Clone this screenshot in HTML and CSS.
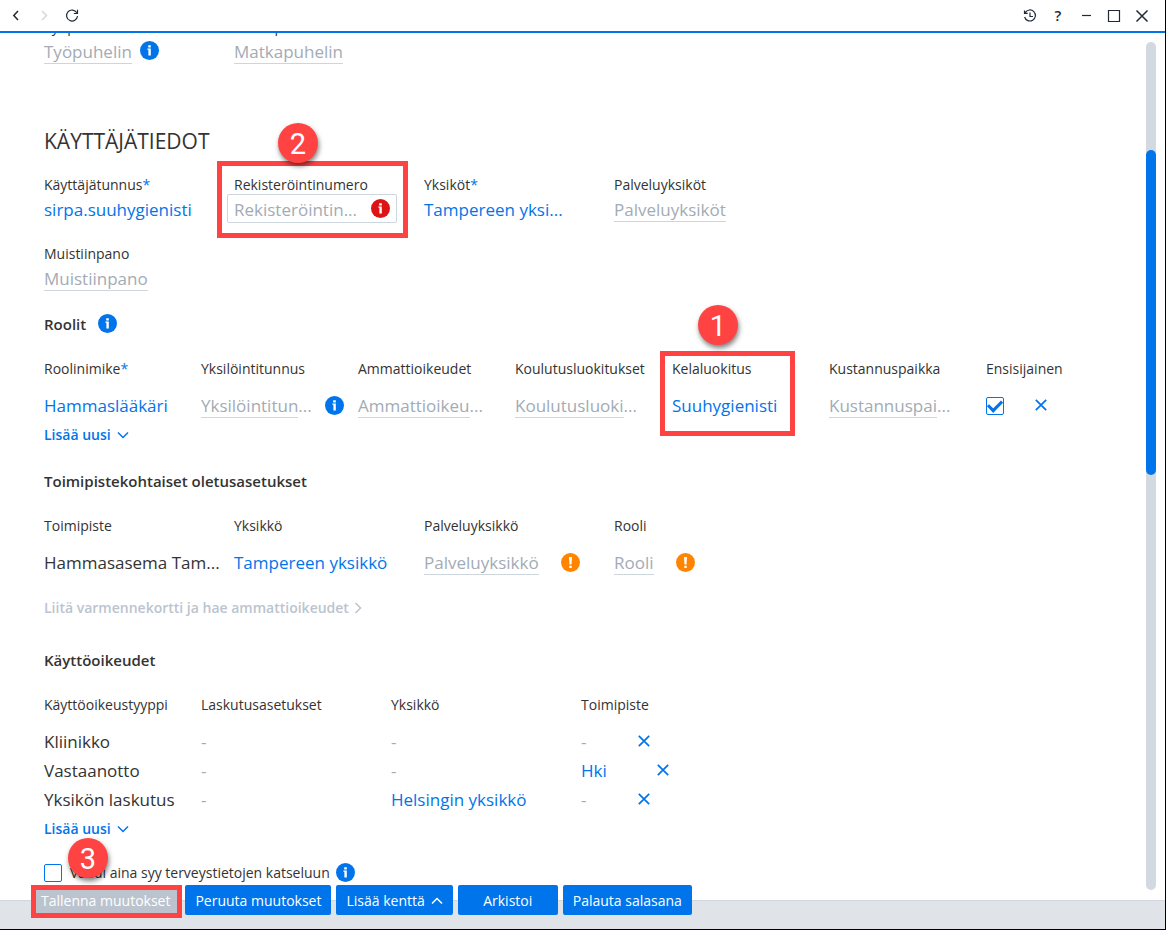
FILE: index.html
```
<!DOCTYPE html>
<html lang="fi">
<head>
    <meta charset="utf-8">
    <title>Käyttäjätiedot</title>
    <link rel="stylesheet" href="styles.css">
</head>
<body>
    <!-- Shared icons -->
    <svg class="sprite" aria-hidden="true">
        <symbol id="icon-info" viewBox="0 0 19 19">
            <circle cx="9.5" cy="9.5" r="9.5" fill="currentColor"/>
            <path d="M8.2 4.2h2.6v2.2H8.2zM7.4 7.6h3.4v6.9H8.4V8.8h-1z" fill="#fff"/>
        </symbol>
        <symbol id="icon-warn" viewBox="0 0 19 19">
            <circle cx="9.5" cy="9.5" r="9.5" fill="currentColor"/>
            <path d="M8 4h3l-.5 7.5h-2zM8.3 12.7h2.4V15H8.3z" fill="#fff"/>
        </symbol>
        <symbol id="icon-x" viewBox="0 0 12 12">
            <path d="M.8.8l10.4 10.4M11.2.8L.8 11.2" fill="none" stroke="currentColor" stroke-width="1.7"/>
        </symbol>
        <symbol id="icon-down" viewBox="0 0 12 12">
            <path d="M1 3.5l5 5 5-5" fill="none" stroke="currentColor" stroke-width="1.5"/>
        </symbol>
    </svg>

    <header class="titlebar">
        <button class="tool" aria-label="Takaisin"><svg width="14" height="14" viewBox="0 0 14 14"><path d="M9 2L4.8 6.5 9 11"/></svg></button>
        <button class="tool muted" aria-label="Eteenpäin" disabled><svg width="14" height="14" viewBox="0 0 14 14"><path d="M5 2l4.5 4.5L5 11"/></svg></button>
        <button class="tool thin" aria-label="Päivitä"><svg width="14" height="14" viewBox="0 0 14 14"><path d="M11.8 3.8A5.5 5.5 0 1 0 12.5 7M12.5 .8v3.7H8.8"/></svg></button>
        <span class="spacer"></span>
        <button class="tool thin" aria-label="Historia"><svg width="14" height="14" viewBox="0 0 14 14"><path d="M2.2 3.6A5.5 5.5 0 1 1 1.6 8M1.5 1.4v3h3.2M7 3.5v4h3"/></svg></button>
        <button class="tool help" aria-label="Ohje">?</button>
        <button class="tool thin" aria-label="Pienennä"><svg width="14" height="14" viewBox="0 0 14 14"><path d="M3 6.5h9"/></svg></button>
        <button class="tool thin" aria-label="Suurenna"><svg width="14" height="14" viewBox="0 0 14 14"><path d="M1.5 1.5h11v11h-11z"/></svg></button>
        <button class="tool" aria-label="Sulje"><svg width="14" height="14" viewBox="0 0 14 14"><path d="M1.5 1.5l11 11M12.5 1.5l-11 11"/></svg></button>
    </header>

    <main class="main">
        <div class="content">
            <!-- Phone numbers -->
            <div class="fields phones">
                <div class="field">
                    <div class="label">Työpuhelin</div>
                    <div class="value-row"><button class="value empty">Työpuhelin</button><svg class="badge-icon"><use href="#icon-info"/></svg></div>
                </div>
                <div class="field">
                    <div class="label">Matkapuhelin</div>
                    <div class="value-row"><button class="value empty">Matkapuhelin</button></div>
                </div>
            </div>

            <h1>KÄYTTÄJÄTIEDOT</h1>
            <div class="fields">
                <div class="field">
                    <div class="label">Käyttäjätunnus<span class="req">*</span></div>
                    <div class="value-row"><button class="value">sirpa.suuhygienisti</button></div>
                </div>
                <div class="field">
                    <label class="label" for="regnum">Rekisteröintinumero</label>
                    <div class="input-box">
                        <input type="text" id="regnum" placeholder="Rekisteröintin...">
                        <svg class="badge-icon error"><use href="#icon-info"/></svg>
                    </div>
                    <div class="mark mark-reg"></div>
                    <div class="step step-reg">2</div>
                </div>
                <div class="field">
                    <div class="label">Yksiköt<span class="req">*</span></div>
                    <div class="value-row"><button class="value">Tampereen yksi...</button></div>
                </div>
                <div class="field">
                    <div class="label">Palveluyksiköt</div>
                    <div class="value-row"><button class="value empty">Palveluyksiköt</button></div>
                </div>
                <div class="field">
                    <div class="label">Muistiinpano</div>
                    <div class="value-row"><button class="value empty">Muistiinpano</button></div>
                </div>
            </div>

            <!-- Roles -->
            <h2>Roolit <svg class="badge-icon"><use href="#icon-info"/></svg></h2>
            <table class="roles">
                <thead>
                    <tr>
                        <th>Roolinimike<span class="req">*</span></th>
                        <th>Yksilöintitunnus</th>
                        <th>Ammattioikeudet</th>
                        <th>Koulutusluokitukset</th>
                        <th>Kelaluokitus</th>
                        <th>Kustannuspaikka</th>
                        <th>Ensisijainen</th>
                    </tr>
                </thead>
                <tbody>
                    <tr>
                        <td><button class="value">Hammaslääkäri</button></td>
                        <td><div class="value-row mid"><button class="cut"><span class="value empty">Yksilöintitun</span>...</button><svg class="badge-icon"><use href="#icon-info"/></svg></div></td>
                        <td><button class="cut"><span class="value empty">Ammattioikeu</span>...</button></td>
                        <td><button class="cut"><span class="value empty">Koulutusluoki</span>...</button></td>
                        <td class="field">
                            <button class="value">Suuhygienisti</button>
                            <div class="mark mark-kela"></div>
                            <div class="step step-kela">1</div>
                        </td>
                        <td><button class="cut"><span class="value empty">Kustannuspai</span>...</button></td>
                        <td><div class="value-row primary"><input type="checkbox" aria-label="Ensisijainen" checked><button class="remove" aria-label="Poista"><svg><use href="#icon-x"/></svg></button></div></td>
                    </tr>
                </tbody>
            </table>
            <button class="add">Lisää uusi <svg><use href="#icon-down"/></svg></button>

            <!-- Office defaults -->
            <h2>Toimipistekohtaiset oletusasetukset</h2>
            <table class="offices">
                <thead>
                    <tr><th>Toimipiste</th><th>Yksikkö</th><th>Palveluyksikkö</th><th>Rooli</th></tr>
                </thead>
                <tbody>
                    <tr>
                        <td>Hammasasema Tam...</td>
                        <td><button class="value">Tampereen yksikkö</button></td>
                        <td><div class="value-row wide"><button class="value empty">Palveluyksikkö</button><svg class="badge-icon warn"><use href="#icon-warn"/></svg></div></td>
                        <td><div class="value-row wide"><button class="value empty">Rooli</button><svg class="badge-icon warn"><use href="#icon-warn"/></svg></div></td>
                    </tr>
                </tbody>
            </table>
            <button class="add attach" disabled>Liitä varmennekortti ja hae ammattioikeudet <svg class="right"><use href="#icon-down"/></svg></button>

            <!-- Permissions -->
            <h2 class="rights-title">Käyttöoikeudet</h2>
            <table class="rights">
                <thead>
                    <tr><th>Käyttöoikeustyyppi</th><th>Laskutusasetukset</th><th>Yksikkö</th><th>Toimipiste</th></tr>
                </thead>
                <tbody>
                    <tr>
                        <td>Kliinikko</td>
                        <td class="none">-</td>
                        <td class="none">-</td>
                        <td class="none"><div class="value-row last">-<button class="remove" aria-label="Poista"><svg><use href="#icon-x"/></svg></button></div></td>
                    </tr>
                    <tr>
                        <td>Vastaanotto</td>
                        <td class="none">-</td>
                        <td class="none">-</td>
                        <td><div class="value-row last"><button class="value">Hki</button><button class="remove" aria-label="Poista"><svg><use href="#icon-x"/></svg></button></div></td>
                    </tr>
                    <tr>
                        <td>Yksikön laskutus</td>
                        <td class="none">-</td>
                        <td><button class="value">Helsingin yksikkö</button></td>
                        <td class="none"><div class="value-row last">-<button class="remove" aria-label="Poista"><svg><use href="#icon-x"/></svg></button></div></td>
                    </tr>
                </tbody>
            </table>
            <button class="add">Lisää uusi <svg><use href="#icon-down"/></svg></button>

            <div class="check-row">
                <input type="checkbox" id="require-reason">
                <label for="require-reason">Vaadi aina syy terveystietojen katseluun</label>
                <svg class="badge-icon"><use href="#icon-info"/></svg>
            </div>
        </div>
        <div class="scrollbar"><div class="thumb"></div></div>
    </main>

    <footer class="actions">
        <div class="field">
            <button class="button" disabled>Tallenna muutokset</button>
            <div class="mark mark-save"></div>
            <div class="step step-save">3</div>
        </div>
        <button class="button">Peruuta muutokset</button>
        <button class="button">Lisää kenttä <svg class="up"><use href="#icon-down"/></svg></button>
        <button class="button">Arkistoi</button>
        <button class="button">Palauta salasana</button>
    </footer>
</body>
</html>
```

FILE: styles.css
```
* {
    box-sizing: border-box;
}
body {
    font-family: "Open Sans", "Noto Sans", sans-serif;
    font-size: 14px;
    line-height: 20px;
    color: #333;
    background: white;
    margin: 0;
    height: 100vh;
    display: flex;
    flex-direction: column;
    border-right: 1px solid black;
    border-bottom: 1px solid black;
    overflow: hidden;
}
button {
    font: inherit;
    color: inherit;
    background: none;
    border: none;
    padding: 0;
    cursor: pointer;
    white-space: nowrap;
}
svg {
    display: block;
    flex: none;
}
.sprite {
    position: absolute;
    width: 0;
    height: 0;
}

/* Title bar */
.titlebar {
    display: flex;
    align-items: center;
    height: 33px;
    flex: none;
    padding: 0 9px 0 2px;
    border-bottom: 2px solid #0075eb;
}
.spacer {
    flex: 1;
}
.tool {
    width: 28px;
    height: 28px;
    display: flex;
    align-items: center;
    justify-content: center;
    color: #1f2937;
}
.tool svg {
    fill: none;
    stroke: currentColor;
    stroke-width: 1.5;
}
.tool.thin svg {
    stroke-width: 1.2;
}
.tool.muted {
    color: #d0d9e4;
}
.tool.help {
    font-size: 15px;
    font-weight: 600;
    line-height: 28px;
    padding-bottom: 2px;
}

/* Scrolling area */
.main {
    flex: 1;
    min-height: 0;
    display: flex;
}
.content {
    flex: 1;
    min-width: 0;
    padding-left: 44px;
    overflow: hidden;
}
.scrollbar {
    width: 10px;
    margin: 9px 9px 10px 0;
    padding-top: 108px;
    border-radius: 5px;
    background: #d2d9e0;
}
.thumb {
    height: 325px;
    border-radius: 5px;
    background: #0075eb;
}

h1 {
    font-size: 21px;
    font-weight: 400;
    line-height: 30px;
    margin: 61px 0 18px;
}
h2 {
    display: flex;
    align-items: center;
    gap: 12px;
    font-size: 15px;
    font-weight: 600;
    line-height: 20px;
    margin: 22px 0 25px;
}

/* Fields */
.fields {
    display: grid;
    grid-template-columns: repeat(4, 190px);
    row-gap: 20px;
}
.phones {
    margin-top: -17px;
}
.field {
    position: relative;
}
.label {
    display: block;
    height: 20px;
    line-height: 22px;
}
.req {
    color: #0075eb;
}
.value-row {
    display: flex;
    align-items: center;
    gap: 8px;
    height: 29px;
}
.fields .value-row {
    padding-top: 2px;
}
.fields .badge-icon {
    margin-bottom: 2px;
}
.value-row.mid {
    gap: 13px;
}
.value-row.wide {
    gap: 22px;
}
.value-row.primary {
    gap: 31px;
}
.value-row.last {
    gap: 50px;
}
.value {
    font-size: 17px;
    line-height: 20px;
    color: #0075eb;
}
.value.empty {
    color: #a3abb5;
    border-bottom: 1px solid #cdd5dd;
}
.value-row > .empty {
    margin-top: 2px;
    line-height: 22px;
}
.cut {
    font-size: 17px;
    line-height: 20px;
    color: #a3abb5;
}
.badge-icon {
    width: 19px;
    height: 19px;
    margin-bottom: 1px;
    color: #0075eb;
}
.badge-icon.error {
    color: #dd1414;
}
.badge-icon.warn {
    color: #ff8400;
}
.input-box {
    display: flex;
    align-items: center;
    width: 170px;
    height: 29px;
    margin-left: -7px;
    padding: 0 6px;
    border: 1px solid #cdd5dd;
    border-radius: 2px;
}
.input-box input {
    flex: 1;
    min-width: 0;
    font: inherit;
    font-size: 17px;
    border: none;
    padding: 2px 0 0;
    outline: none;
}
.input-box .badge-icon {
    margin: 0;
}
.input-box input::placeholder {
    color: #a3abb5;
}

/* Tables */
table {
    table-layout: fixed;
    border-collapse: collapse;
}
th {
    text-align: left;
    font-weight: 400;
    padding: 0 0 12px;
    white-space: nowrap;
}
td {
    height: 29px;
    padding: 0;
    font-size: 17px;
    line-height: 20px;
    white-space: nowrap;
}
td.none {
    color: #a3abb5;
}
.roles {
    width: 1099px;
}
.offices {
    width: 760px;
}
.rights {
    width: 727px;
}
.rights th:first-child {
    width: 157px;
}
.none .value-row {
    gap: 52px;
}
.remove svg {
    width: 12px;
    height: 12px;
    margin-bottom: 2px;
    color: #0075eb;
}
.add {
    display: flex;
    align-items: center;
    gap: 6px;
    height: 29px;
    font-weight: 600;
    color: #0075eb;
}
.add svg,
.button svg {
    width: 12px;
    height: 12px;
}
.add svg.right {
    margin-left: -3px;
    transform: rotate(-90deg);
}
.attach {
    margin-top: 16px;
    color: #bbc4ce;
}
.rights-title {
    margin-top: 28px;
}

/* Tick boxes */
input[type="checkbox"] {
    appearance: none;
    width: 18px;
    height: 18px;
    margin: 0;
    border: 1px solid #0075eb;
    border-radius: 2px;
    display: grid;
    place-items: center;
}
input[type="checkbox"]:checked::after {
    content: "";
    width: 11px;
    height: 6px;
    margin-bottom: 3px;
    border-left: 3px solid #0075eb;
    border-bottom: 3px solid #0075eb;
    transform: rotate(-45deg);
}
.check-row {
    display: flex;
    align-items: center;
    gap: 6px;
    height: 20px;
    margin-top: 20px;
}
.check-row label {
    margin-left: 2px;
}

/* Bottom actions */
.actions {
    position: relative;
    flex: none;
    display: flex;
    align-items: flex-start;
    gap: 5px;
    height: 29px;
    padding-left: 31px;
    background: #e0e4e8;
    border-top: 1px solid #d0d7de;
}
.button {
    display: flex;
    align-items: center;
    justify-content: center;
    gap: 6px;
    min-width: 100px;
    height: 30px;
    margin-top: -16px;
    padding: 1px 10px 0;
    border-radius: 2px;
    background: #0075eb;
    color: white;
}
.button:disabled {
    background: #bbc4ce;
}
.up {
    transform: rotate(180deg);
}

/* Numbered guide marks */
.mark {
    position: absolute;
    border: 5px solid #ff4343;
    pointer-events: none;
}
.step {
    position: absolute;
    width: 40px;
    height: 40px;
    border-radius: 50%;
    background: #ff4343;
    box-shadow: 1px 3px 5px rgba(0, 0, 0, 0.5);
    color: white;
    font-family: Roboto, sans-serif;
    font-size: 29px;
    line-height: 42px;
    text-align: center;
}
.mark-reg {
    left: -17px;
    top: -13px;
    width: 191px;
    height: 77px;
}
.step-reg {
    left: 44px;
    top: -51px;
}
.mark-kela {
    left: -12px;
    top: -40px;
    width: 135px;
    height: 85px;
}
.step-kela {
    left: 26px;
    top: -86px;
}
.mark-save {
    left: 0;
    top: -16px;
    width: 151px;
    height: 33px;
}
.step-save {
    left: 37px;
    top: -63px;
}
```
